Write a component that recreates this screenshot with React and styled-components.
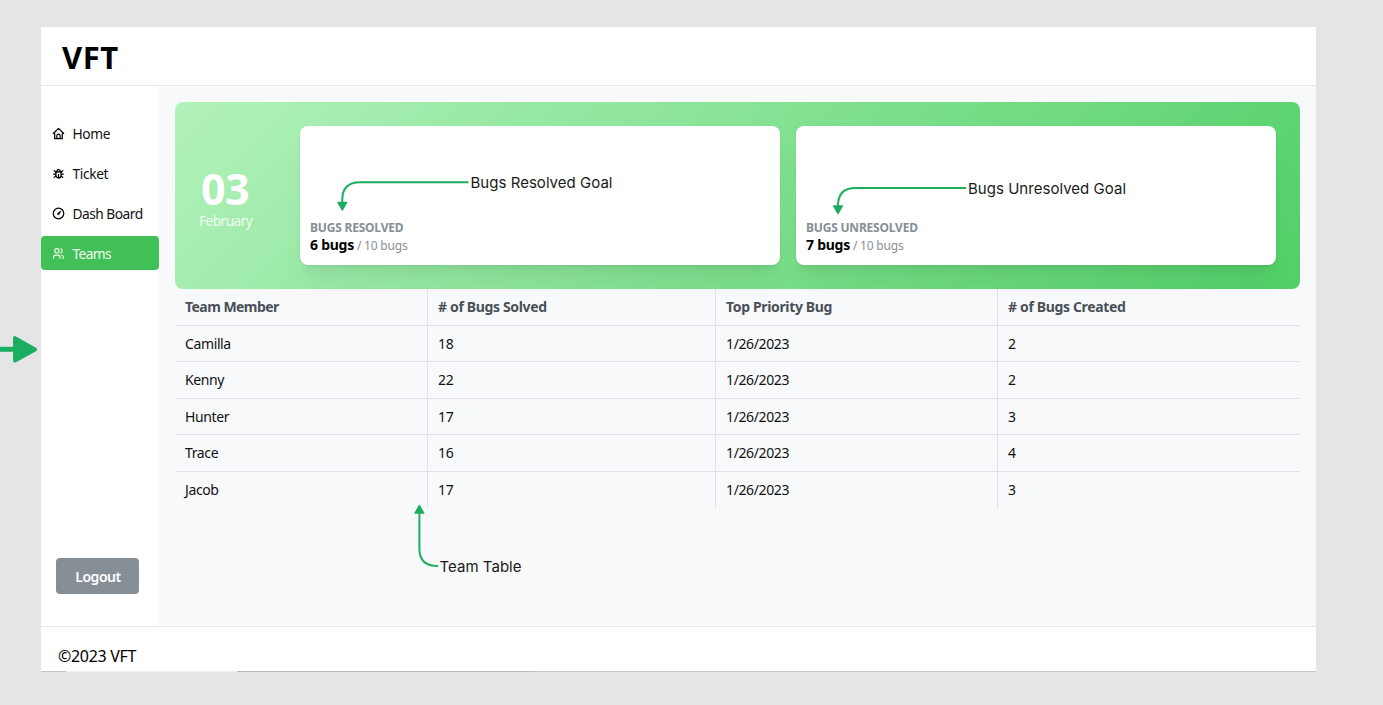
import React from "react";
import styled, { createGlobalStyle } from "styled-components";
import { TbBug, TbUsers } from "react-icons/tb";

const Global = createGlobalStyle`
  * { box-sizing: border-box; }
  body { margin: 0; background: #e5e5e5; overflow: hidden; font-family: "Noto Sans", "Open Sans", sans-serif; color: #000; }
`;

const Canvas = styled.div`
  position: relative;
  width: 1383px;
  height: 705px;
  padding: 27px 67px 0 41px;
`;
const Shell = styled.div`
  width: 1275px;
  height: 644px;
  display: flex;
  flex-direction: column;
  background: #fff;
`;
const Header = styled.header`
  height: 59px;
  padding-left: 21px;
  display: flex;
  align-items: center;
  border-bottom: 1px solid #e6e8eb;
`;
const Brand = styled.h1`
  margin: 0;
  padding-top: 1px;
  font-size: 31px;
  line-height: 44px;
  font-weight: 700;
  letter-spacing: 0.5px;
`;
const Body = styled.div`
  height: 540px;
  display: flex;
`;
const Sidebar = styled.nav`
  width: 118px;
  display: flex;
  flex-direction: column;
  padding-top: 30.6px;
`;
const NavItem = styled.a`
  height: 34px;
  flex: none;
  margin-bottom: 5.9px;
  padding-left: 11px;
  display: flex;
  align-items: center;
  gap: 7.4px;
  border-radius: 4px;
  font-size: 13.75px;
  letter-spacing: ${(p) => p.$spacing || "-0.35px"};
  white-space: nowrap;
  color: ${(p) => (p.$active ? "#f4fcee" : "#111")};
  background: ${(p) => (p.$active ? "#40c057" : "transparent")};
  svg { width: 13px; height: 13px; flex: none; }
`;
const LineIcon = styled.svg.attrs({ viewBox: "0 0 24 24" })`
  fill: none;
  stroke: #000;
  stroke-width: 2.3;
  stroke-linecap: round;
  stroke-linejoin: round;
`;
const BugIcon = styled(TbBug)`
  color: #000;
  stroke-width: 2.4;
`;
const Logout = styled.button`
  width: 83px;
  height: 36px;
  margin: auto 0 32px 15px;
  padding: 0 0 0 1px;
  border: 0;
  border-radius: 4px;
  background: #868e96;
  color: #fff;
  font: 600 14px "Noto Sans", sans-serif;
  letter-spacing: -0.45px;
`;
const Main = styled.main`
  flex: 1;
  padding: 16px 16px 0;
  background: #f8f9fb;
`;
const Hero = styled.section`
  height: 187px;
  padding: 24px;
  display: flex;
  border-radius: 8px;
  background: linear-gradient(135deg, #b2f2bb 0%, #51cf66 100%);
`;
const DateBlock = styled.div`
  width: 101px;
  padding-top: 38px;
  color: #fff;
`;
const Day = styled.div`
  width: 52px;
  text-align: center;
  font-size: 43px;
  line-height: 49px;
  font-weight: 700;
  letter-spacing: -0.6px;
`;
const Month = styled.div`
  font-size: 13.75px;
  line-height: 16px;
  letter-spacing: -0.6px;
  opacity: 0.85;
`;
const Cards = styled.div`
  flex: 1;
  display: flex;
  gap: 16px;
`;
const Card = styled.article`
  flex: 1;
  padding: 0 0 10px 10px;
  display: flex;
  flex-direction: column;
  justify-content: flex-end;
  border-radius: 8px;
  background: #fff;
  box-shadow: 0 1px 3px rgba(0, 0, 0, 0.05), 0 20px 25px -5px rgba(0, 0, 0, 0.05), 0 10px 10px -5px rgba(0, 0, 0, 0.04);
`;
const CardLabel = styled.div`
  font-size: 12px;
  line-height: 17px;
  font-weight: 700;
  letter-spacing: -0.2px;
  color: #868e96;
`;
const CardValue = styled.div`
  font-size: 12px;
  line-height: 18px;
  letter-spacing: -0.2px;
  color: #868e96;
  strong { font-size: 14px; letter-spacing: -0.25px; color: #000; }
`;
const Table = styled.table`
  width: 1125px;
  table-layout: fixed;
  border-collapse: separate;
  border-spacing: 0;
  font-size: 14px;
  letter-spacing: -0.38px;
  th, td {
    height: 36.5px;
    padding: 0 0 0 10px;
    text-align: left;
    border-bottom: 1px solid #dee2e6;
  }
  th { font-weight: 700; color: #495057; letter-spacing: -0.35px; }
  td { color: #111; }
  th + th, td + td { border-left: 1px solid #dee2e6; }
  th:first-child { letter-spacing: -0.55px; }
  tr:last-child td { border-bottom: 0; }
`;
const Footer = styled.footer`
  height: 45px;
  padding: 15px 0 0 17px;
  border-top: 1px solid #e6e8eb;
  font-size: 16px;
  line-height: 28px;
  letter-spacing: -0.3px;
`;
const Edge = styled.div`
  width: 1275px;
  height: 1px;
  background: linear-gradient(90deg, #c4c4c4 25px, #f0f0f0 25px 196px, #b9b9b9 196px 494px, #c8c8c8 494px);
`;
const Overlay = styled.svg`
  position: absolute;
  inset: 0;
`;
const Note = styled.span`
  position: absolute;
  left: ${(p) => p.$x}px;
  top: ${(p) => p.$y}px;
  font: 400 15px/20px Inter, sans-serif;
  letter-spacing: 0.03px;
  color: #1a1a1a;
  white-space: nowrap;
`;

const HomeIcon = () => (
  <LineIcon>
    <path d="M5 12H2.500L12 2.500 21.500 12H19M5 12v9.500h14V12" />
    <path d="M9 21v-5a3 3 0 0 1 6 0v5" />
  </LineIcon>
);

const GaugeIcon = () => (
  <LineIcon>
    <circle cx="12" cy="12" r="9.700" />
    <path d="M16 8l-2.500 5.500-3.500 1 1-3.500z" fill="#000" strokeWidth="1" />
  </LineIcon>
);

const rows = [
  ["Camilla", 18, "1/26/2023", 2],
  ["Kenny", 22, "1/26/2023", 2],
  ["Hunter", 17, "1/26/2023", 3],
  ["Trace", 16, "1/26/2023", 4],
  ["Jacob", 17, "1/26/2023", 3],
];

export default function App() {
  return (
    <Canvas>
      <Global />
      <Shell>
        <Header><Brand>VFT</Brand></Header>
        <Body>
          <Sidebar>
            <NavItem><HomeIcon />Home</NavItem>
            <NavItem><BugIcon />Ticket</NavItem>
            <NavItem $spacing="-0.5px"><GaugeIcon />Dash Board</NavItem>
            <NavItem $active $spacing="-0.6px"><TbUsers />Teams</NavItem>
            <Logout>Logout</Logout>
          </Sidebar>
          <Main>
            <Hero>
              <DateBlock><Day>03</Day><Month>February</Month></DateBlock>
              <Cards>
                <Card>
                  <CardLabel>BUGS RESOLVED</CardLabel>
                  <CardValue><strong>6 bugs</strong> / 10 bugs</CardValue>
                </Card>
                <Card>
                  <CardLabel>BUGS UNRESOLVED</CardLabel>
                  <CardValue><strong>7 bugs</strong> / 10 bugs</CardValue>
                </Card>
              </Cards>
            </Hero>
            <Table>
              <colgroup><col width="252" /><col width="288" /><col width="282" /><col width="303" /></colgroup>
              <thead>
                <tr><th>Team Member</th><th># of Bugs Solved</th><th>Top Priority Bug</th><th># of Bugs Created</th></tr>
              </thead>
              <tbody>
                {rows.map((r) => (
                  <tr key={r[0]}>{r.map((c, i) => <td key={i}>{c}</td>)}</tr>
                ))}
              </tbody>
            </Table>
          </Main>
        </Body>
        <Footer>©2023 VFT</Footer>
      </Shell>
      <Edge />
      <Overlay width="1383" height="705" fill="none" stroke="#1bae60" strokeWidth="2">
        <path d="M468.500 182.300H360Q342.300 182.300 342.300 200V203" />
        <path d="M338 202.500h8.600l-4.300 7.500z" fill="#1bae60" strokeLinejoin="round" strokeWidth="1.500" />
        <path d="M966 188H855.500Q838 188 838 205.500V207" />
        <path d="M833.700 206h8.600l-4.300 7.500z" fill="#1bae60" strokeLinejoin="round" strokeWidth="1.500" />
        <path d="M438 566Q419.400 566 419.400 549V512" />
        <path d="M415.100 513h8.600l-4.300-7.500z" fill="#1bae60" strokeLinejoin="round" strokeWidth="1.500" />
        <path d="M0 349.300H16" strokeWidth="5" />
        <path d="M15 338.200v22.300L35 349.400z" fill="#1bae60" strokeLinejoin="round" strokeWidth="4" />
      </Overlay>
      <Note $x={470.500} $y={173}>Bugs Resolved Goal</Note>
      <Note $x={968} $y={178.500}>Bugs Unresolved Goal</Note>
      <Note $x={439.500} $y={556.500}>Team Table</Note>
    </Canvas>
  );
}
